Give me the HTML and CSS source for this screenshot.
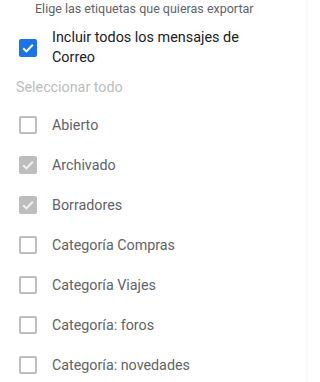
FILE: index.html
```html
<!DOCTYPE html>
<html lang="es">
<head>
<meta charset="utf-8">
<link rel="stylesheet" href="styles.css">
</head>
<body>
<div class="panel">
  <p class="hint">Elige las etiquetas que quieras exportar</p>
  <label class="include">
    <span class="box box-blue"><svg viewBox="0 0 18 18"><path d="M4.2 9.2l3.2 3.2 6.4-6.6" /></svg></span>
    <span class="include-text">Incluir todos los mensajes de Correo</span>
  </label>
  <div class="select-all">Seleccionar todo</div>
  <ul class="list">
    <li class="row"><span class="box box-empty"></span><span class="label">Abierto</span></li>
    <li class="row"><span class="box box-gray"><svg viewBox="0 0 18 18"><path d="M4.2 9.2l3.2 3.2 6.4-6.6" /></svg></span><span class="label">Archivado</span></li>
    <li class="row"><span class="box box-gray"><svg viewBox="0 0 18 18"><path d="M4.2 9.2l3.2 3.2 6.4-6.6" /></svg></span><span class="label">Borradores</span></li>
    <li class="row"><span class="box box-empty"></span><span class="label">Categoría Compras</span></li>
    <li class="row"><span class="box box-empty"></span><span class="label">Categoría Viajes</span></li>
    <li class="row"><span class="box box-empty"></span><span class="label">Categoría: foros</span></li>
    <li class="row"><span class="box box-empty"></span><span class="label">Categoría: novedades</span></li>
  </ul>
</div>
</body>
</html>
```
FILE: styles.css
```css
html, body {
  margin: 0;
  padding: 0;
  background: #ffffff;
}
body {
  font-family: Roboto, "Liberation Sans", Arial, sans-serif;
  width: 308px;
  height: 382px;
  overflow: hidden;
}
.panel {
  width: 306px;
  height: 382px;
  border-right: 2px solid #fafafa;
  box-sizing: content-box;
}
.hint {
  margin: 0;
  padding: 2px 0 0 35px;
  font-size: 12.5px;
  line-height: 14px;
  color: #5f6368;
}
.include {
  display: flex;
  align-items: center;
  gap: 15px;
  padding: 12px 0 0 19px;
}
.include-text {
  font-size: 14.4px;
  line-height: 20px;
  color: #202124;
  width: 210px;
}
.box {
  width: 18px;
  height: 18px;
  box-sizing: border-box;
  border-radius: 2px;
  flex: none;
  display: flex;
}
.box svg {
  width: 18px;
  height: 18px;
  fill: none;
  stroke: #ffffff;
  stroke-width: 2;
}
.box-blue {
  background: #1a73e8;
}
.box-gray {
  background: #bdbdbd;
}
.box-gray svg {
  stroke: #f1f1f1;
}
.box-empty {
  border: 2px solid #bdbdbd;
}
.select-all {
  padding: 9px 0 0 16px;
  font-size: 14.3px;
  line-height: 20px;
  color: #bdbdbd;
}
.list {
  list-style: none;
  margin: 0;
  padding: 8px 0 0 19px;
}
.row {
  display: flex;
  align-items: center;
  gap: 15px;
  height: 40px;
  font-size: 14.3px;
  color: #5f6368;
}
```
